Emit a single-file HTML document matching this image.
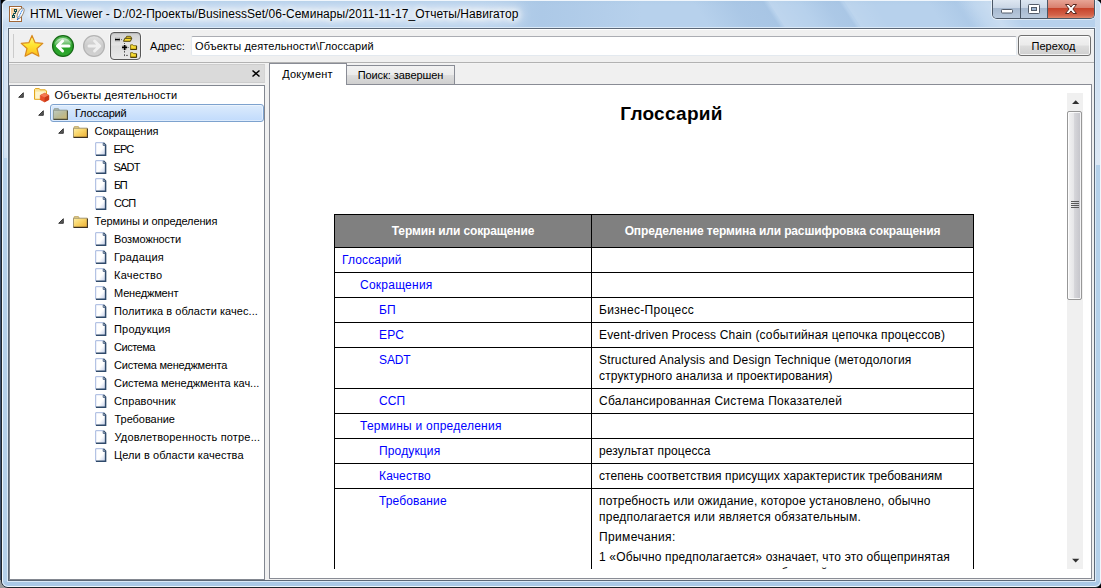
<!DOCTYPE html>
<html lang="ru">
<head>
<meta charset="utf-8">
<title>HTML Viewer</title>
<style>
*{box-sizing:border-box;margin:0;padding:0}
html,body{width:1101px;height:588px;overflow:hidden}
body{position:relative;background:#000;font-family:"Liberation Sans",sans-serif;font-size:11px;color:#000}
.abs{position:absolute}
/* ---------- window frame ---------- */
#bgl{left:0;top:0;width:1px;height:588px;background:#3b4f6e}
#frame{left:1px;top:-1px;width:1101px;height:589px;border:1px solid #1f242b;border-radius:7px 7px 7px 7px;background:#b4d0ea;overflow:hidden}
#frame .hl{left:0;top:0;right:0;bottom:0;border:1px solid #f0f6fc;border-radius:6px}
#titlebg{left:0;top:0;width:1099px;height:28px;background:linear-gradient(to right,rgba(120,160,205,0) 480px,rgba(120,160,205,.16) 540px,rgba(120,160,205,.12) 570px,rgba(120,160,205,0) 640px),linear-gradient(to bottom,#f3f7fb 0,#f3f7fb 1px,#b4cfea 1px,#b7d1ec 6px,#b7d1ec 100%)}
#glow{left:-10px;top:7px;width:530px;height:15px;background:rgba(255,255,255,.54);filter:blur(6px);border-radius:8px}
.streak{top:1px;height:27px;transform:skewX(33deg);transform-origin:0 0}
#title{left:30px;top:7px;font-size:12px;line-height:15px;white-space:nowrap;letter-spacing:.04px;text-shadow:0 0 6px #fff,0 0 6px #fff,0 0 9px #fff}
#clientborder{left:8px;top:28px;width:1087px;height:553px;border:1px solid #5c6877;box-shadow:0 0 0 1px #dceaf8;background:#f0f0f0}
/* caption buttons */
#caps{left:992px;top:-1px;width:103px;height:20px;border:1px solid #4b5766;border-top:none;border-radius:0 0 5px 5px;overflow:hidden;box-shadow:0 0 0 1px rgba(255,255,255,.55)}
#caps div{position:absolute;top:0;height:19px}
#bmin{left:0;width:28px;background:linear-gradient(to bottom,#e0e9f3 0,#cbd7e6 45%,#a7b9cf 50%,#b9c9dc 100%);border-right:1px solid #4b5766}
#bmax{left:28px;width:27px;background:linear-gradient(to bottom,#e0e9f3 0,#cbd7e6 45%,#a7b9cf 50%,#b9c9dc 100%);border-right:1px solid #4b5766}
#bclose{left:55px;width:46px;background:linear-gradient(to bottom,#e9a99b 0,#d9806f 45%,#c7432b 50%,#d4634a 85%,#e08a6e 100%)}
/* ---------- toolbar ---------- */
#toolbar{left:9px;top:29px;width:1085px;height:33px;background:#f0f0f0;border-top:1px solid #fff}
#tbline{left:9px;top:62px;width:1085px;height:1px;background:#b2b2b2}
#tbline2{left:9px;top:63px;width:1085px;height:1px;background:#f3f3f3}
#sep{left:13px;top:34px;width:1px;height:24px;background:#cbcbcb}
#treebtn{left:110px;top:32px;width:31px;height:28px;border:1px solid #585858;border-radius:4px;background:linear-gradient(to bottom,#cfcfcf 0,#e5e5e5 46%,#dedede 50%,#e9e9e9 100%);box-shadow:inset 0 1px 1px rgba(0,0,0,.1),0 0 0 1px rgba(255,255,255,.5)}
#addrlab{left:150px;top:39px;line-height:14px;white-space:nowrap;letter-spacing:.05px}
#addr{left:191px;top:36px;width:826px;height:20px;background:#fff;border:1px solid #e3e9ef;border-top-color:#abadb3;border-radius:2px}
#addrtxt{left:195px;top:39px;line-height:14px;white-space:nowrap;letter-spacing:.12px}
#gobtn{left:1018px;top:35px;width:73px;height:21px;border:1px solid #707070;border-radius:3px;background:linear-gradient(to bottom,#f2f2f2 0,#ebebeb 48%,#dddddd 52%,#cfcfcf 100%);box-shadow:inset 0 0 0 1px rgba(255,255,255,.75);text-align:center;line-height:19px;padding-top:1px;letter-spacing:.05px;padding-right:2px}
/* ---------- left panel ---------- */
#lhead{left:9px;top:64px;width:256px;height:19px;background:#dadada;border:1px solid #cdcdcd;border-left-color:#d4d4d4;border-right-color:#d4d4d4}
#tree{left:9px;top:85px;width:256px;height:495px;background:#fff;border:1px solid #828790}
.row{position:absolute;left:0;height:18px;line-height:18px;white-space:nowrap;letter-spacing:.12px}
.sel{position:absolute;left:40px;top:18px;width:214px;height:18px;border:1px solid #7da2ce;border-radius:3px;background:linear-gradient(to bottom,#dcebfc,#c1dbfc);box-shadow:inset 0 0 0 1px rgba(255,255,255,.45)}
.exp{position:absolute;width:0;height:0;border-style:solid;border-width:0 0 6px 6px;border-color:transparent transparent #404040 transparent}
/* ---------- right panel ---------- */
#tabpage{left:269px;top:84px;width:823px;height:495px;background:#fff;border:1px solid #898c95}
#tab1{left:269px;top:63px;width:78px;height:22px;background:#fff;border:1px solid #898c95;border-bottom:none;text-align:center;line-height:20px;letter-spacing:.23px;padding-right:1px}
#tab2{left:346px;top:65px;width:109px;height:19px;border:1px solid #898c95;border-bottom:none;background:linear-gradient(to bottom,#f2f2f2 0,#ebebeb 50%,#dddddd 52%,#cfcfcf 100%);text-align:center;line-height:18px;letter-spacing:-.07px}
/* scrollbar */
#sb{left:1067px;top:93px;width:16px;height:476px;background:#f0f0f0}
#thumb{left:1067px;top:111px;width:15px;height:189px;border:1px solid #979797;border-radius:2px;background:linear-gradient(to right,#f3f3f3 0,#e6e6e8 46%,#d6d6da 50%,#c3c3c9 100%);box-shadow:inset 0 0 0 1px rgba(255,255,255,.8)}
/* document */
#doc{left:270px;top:85px;width:797px;height:484px;overflow:hidden;background:#fff}
#h1{left:0;top:17px;width:803px;text-align:center;font-size:19px;font-weight:bold;line-height:24px;letter-spacing:.28px}
table{position:absolute;left:64px;top:129px;border-collapse:collapse;font-size:12px;table-layout:fixed;width:639px}
td,th{white-space:nowrap;border:1px solid #000;vertical-align:top;padding:4px 7px 4px 7px;line-height:16px;text-align:left;font-weight:normal;letter-spacing:.14px}
th{background:#808080;color:#fff;font-weight:bold;text-align:center;padding:8px 4px 8px 4px;letter-spacing:-.13px}
td a{color:#0000ff;text-decoration:none}
.i1{padding-left:25px}.i2{padding-left:44px}
td p{margin:0 0 4px 0}
</style>
</head>
<body>

<svg width="0" height="0" style="position:absolute">
 <defs>
  <linearGradient id="fg" x1="0" y1="0" x2="1" y2="1"><stop offset="0" stop-color="#fff0a6"/><stop offset=".5" stop-color="#f8d162"/><stop offset="1" stop-color="#ecae34"/></linearGradient>
  <linearGradient id="fgs" x1="0" y1="0" x2="1" y2="1"><stop offset="0" stop-color="#c0ccc2"/><stop offset=".5" stop-color="#b9ba96"/><stop offset="1" stop-color="#ccb66c"/></linearGradient>
  <linearGradient id="dgr" x1="0" y1="0" x2="1" y2="1"><stop offset="0" stop-color="#ffffff"/><stop offset=".55" stop-color="#ffffff"/><stop offset="1" stop-color="#b9c6e4"/></linearGradient>
  <linearGradient id="eg" x1="0" y1="0" x2="1" y2="1"><stop offset="0" stop-color="#222"/><stop offset="1" stop-color="#555"/></linearGradient>
  <symbol id="folder" viewBox="0 0 15 12">
    <path d="M.8 2.300L1.400.500H5.400l.9 1.800z" fill="#f7e3a0" stroke="#b89c50" stroke-width=".7"/>
    <path d="M.5 2.200H14.400V11.400H.5z" fill="url(#fg)"/>
    <path d="M.5 11.400V2.200H14.300" fill="none" stroke="#9a8c68" stroke-width=".9"/>
    <path d="M14.400 2.500V11.400H.5" fill="none" stroke="#3c3020" stroke-width="1.100"/>
  </symbol>
  <symbol id="folders" viewBox="0 0 15 12">
    <path d="M.8 2.300L1.400.500H5.400l.9 1.800z" fill="#b8c4bc" stroke="#8c9890" stroke-width=".7"/>
    <path d="M.5 2.200H14.400V11.400H.5z" fill="url(#fgs)"/>
    <path d="M.5 11.400V2.200H14.300" fill="none" stroke="#8a9488" stroke-width=".9"/>
    <path d="M14.400 2.500V11.400H.5" fill="none" stroke="#4a4a38" stroke-width="1.100"/>
  </symbol>
  <symbol id="docu" viewBox="0 0 12 15">
    <path d="M.6.600H8.400L10.800 3V13.600H.6z" fill="url(#dgr)"/>
    <path d="M.7 13.400V.7H8.400" fill="none" stroke="#a3b5de" stroke-width="1"/>
    <path d="M8.400.8L10.600 3V13.300H1" fill="none" stroke="#2f4a6b" stroke-width="1.500"/>
    <path d="M8.200 1.200V3.400H10.400" fill="#eef2fa" stroke="#3c5678" stroke-width=".9"/>
  </symbol>
  <symbol id="expd" viewBox="0 0 7 7"><path d="M6.200.8V6.200H.8z" fill="#595959" stroke="#262626" stroke-width="1" stroke-linejoin="round"/></symbol>
 </defs>
</svg>
<div id="bgl" class="abs"></div>
<div class="abs" style="left:0;top:580px;width:8px;height:8px;background:#9a9a9a"></div>
<div id="frame" class="abs">
  <div id="titlebg" class="abs"></div>
  <div id="glow" class="abs"></div>
  <div class="streak abs" style="left:690px;width:75px;background:linear-gradient(to right,rgba(120,160,205,0) 0,rgba(120,160,205,.2) 55%,rgba(120,160,205,.24) 94%,rgba(120,160,205,0) 100%)"></div>
  <div class="streak abs" style="left:766px;width:30px;background:linear-gradient(to right,rgba(255,255,255,.1),rgba(255,255,255,0))"></div>
  <div class="streak abs" style="left:796px;width:44px;background:linear-gradient(to right,rgba(120,160,205,0) 0,rgba(120,160,205,.18) 60%,rgba(120,160,205,.21) 92%,rgba(120,160,205,0) 100%)"></div>
  <div class="streak abs" style="left:842px;width:30px;background:linear-gradient(to right,rgba(255,255,255,.09),rgba(255,255,255,0))"></div>
  <div class="streak abs" style="left:925px;width:45px;background:linear-gradient(to right,rgba(120,160,205,0) 0,rgba(120,160,205,.14) 60%,rgba(120,160,205,0) 100%)"></div>
  <div class="streak abs" style="left:955px;width:50px;background:linear-gradient(to right,rgba(255,255,255,0),rgba(255,255,255,.25) 60%,rgba(255,255,255,0))"></div>
  <div class="abs" style="left:2px;top:20px;width:5px;height:138px;background:linear-gradient(to bottom,rgba(213,227,243,0),#d5e3f3 12px,#d3e2f2 130px,#cfdff1 100%)"></div>
  <div class="abs" style="left:1093px;top:2px;width:6px;height:163px;background:linear-gradient(to bottom,#c9dcf0 0,#cfe0f2 40%,#dde8f5 100%)"></div>
  <div class="abs" style="left:0;top:581px;width:1099px;height:5px;background:#abc9e7"></div>
  <div class="hl abs"></div>
</div>
<div id="title" class="abs">HTML Viewer - D:/02-Проекты/BusinessSet/06-Семинары/2011-11-17_Отчеты/Навигатор</div>
<div id="caps" class="abs"><div id="bmin"></div><div id="bmax"></div><div id="bclose"></div></div>
<div id="clientborder" class="abs"></div>

<div id="toolbar" class="abs"></div>
<div id="tbline" class="abs"></div>
<div id="tbline2" class="abs"></div>
<div id="sep" class="abs"></div>
<div id="treebtn" class="abs"></div>
<div id="addrlab" class="abs">Адрес:</div>
<div id="addr" class="abs"></div>
<div id="addrtxt" class="abs">Объекты деятельности\Глоссарий</div>
<div id="gobtn" class="abs">Переход</div>

<div id="lhead" class="abs"></div>
<div id="tree" class="abs">
  <div class="sel"></div>
  <svg class="abs" style="left:8px;top:6px" width="6" height="6"><use href="#expd"/></svg>
  <svg class="abs" style="left:28px;top:24px" width="6" height="6"><use href="#expd"/></svg>
  <svg class="abs" style="left:48px;top:42px" width="6" height="6"><use href="#expd"/></svg>
  <svg class="abs" style="left:48px;top:132px" width="6" height="6"><use href="#expd"/></svg>
  <svg class="abs" style="left:23px;top:1px" width="18" height="16" viewBox="0 0 18 16">
<path d="M1.500 12.300V2.500L2.300 1.600h4l.8 1.200h5.200l1.200 1.300v8.200z" fill="#fbe59a" stroke="#e3a51a" stroke-width="1" stroke-linejoin="round"/>
<path d="M2.500 11.500V4.600h9.700v6.900z" fill="#fdf4cc"/>
<path d="M7.300 8.300l4.300-2.100 4.300 2.100v4.400l-4.300 2.300-4.300-2.300z" fill="#e8502a" stroke="#d8431f" stroke-width=".6" stroke-linejoin="round"/>
<path d="M7.300 8.300l4.300 2.100 4.300-2.100-4.300-2.100z" fill="#f47a52"/>
<path d="M11.600 10.400v4.600l4.300-2.300V8.300z" fill="#c93a18"/>
</svg>
  <svg class="abs" style="left:43px;top:22px" width="15" height="12"><use href="#folders"/></svg>
  <svg class="abs" style="left:63px;top:40px" width="15" height="12"><use href="#folder"/></svg>
  <svg class="abs" style="left:63px;top:130px" width="15" height="12"><use href="#folder"/></svg>
  <svg class="abs" style="left:85px;top:56px" width="12" height="15"><use href="#docu"/></svg>
  <svg class="abs" style="left:85px;top:74px" width="12" height="15"><use href="#docu"/></svg>
  <svg class="abs" style="left:85px;top:92px" width="12" height="15"><use href="#docu"/></svg>
  <svg class="abs" style="left:85px;top:110px" width="12" height="15"><use href="#docu"/></svg>
  <svg class="abs" style="left:85px;top:146px" width="12" height="15"><use href="#docu"/></svg>
  <svg class="abs" style="left:85px;top:164px" width="12" height="15"><use href="#docu"/></svg>
  <svg class="abs" style="left:85px;top:182px" width="12" height="15"><use href="#docu"/></svg>
  <svg class="abs" style="left:85px;top:200px" width="12" height="15"><use href="#docu"/></svg>
  <svg class="abs" style="left:85px;top:218px" width="12" height="15"><use href="#docu"/></svg>
  <svg class="abs" style="left:85px;top:236px" width="12" height="15"><use href="#docu"/></svg>
  <svg class="abs" style="left:85px;top:254px" width="12" height="15"><use href="#docu"/></svg>
  <svg class="abs" style="left:85px;top:272px" width="12" height="15"><use href="#docu"/></svg>
  <svg class="abs" style="left:85px;top:290px" width="12" height="15"><use href="#docu"/></svg>
  <svg class="abs" style="left:85px;top:308px" width="12" height="15"><use href="#docu"/></svg>
  <svg class="abs" style="left:85px;top:326px" width="12" height="15"><use href="#docu"/></svg>
  <svg class="abs" style="left:85px;top:344px" width="12" height="15"><use href="#docu"/></svg>
  <svg class="abs" style="left:85px;top:362px" width="12" height="15"><use href="#docu"/></svg>
  <div class="row" style="top:0px;left:44.5px;letter-spacing:0.21px">Объекты деятельности</div>
  <div class="row" style="top:18px;left:65.0px;letter-spacing:-0.23px">Глоссарий</div>
  <div class="row" style="top:36px;left:84.5px;letter-spacing:-0.04px">Сокращения</div>
  <div class="row" style="top:54px;left:103.6px;letter-spacing:-0.99px">EPC</div>
  <div class="row" style="top:72px;left:103.6px;letter-spacing:-0.84px">SADT</div>
  <div class="row" style="top:90px;left:104.0px;letter-spacing:-1.44px">БП</div>
  <div class="row" style="top:108px;left:104.0px;letter-spacing:-0.81px">ССП</div>
  <div class="row" style="top:126px;left:84.5px;letter-spacing:-0.12px">Термины и определения</div>
  <div class="row" style="top:144px;left:104.0px;letter-spacing:-0.11px">Возможности</div>
  <div class="row" style="top:162px;left:104.1px;letter-spacing:0.15px">Градация</div>
  <div class="row" style="top:180px;left:104.0px;letter-spacing:0.23px">Качество</div>
  <div class="row" style="top:198px;left:104.0px;letter-spacing:-0.16px">Менеджмент</div>
  <div class="row" style="top:216px;left:104.0px;letter-spacing:0.06px">Политика в области качес...</div>
  <div class="row" style="top:234px;left:104.0px;letter-spacing:0.18px">Продукция</div>
  <div class="row" style="top:252px;left:104.0px;letter-spacing:-0.48px">Система</div>
  <div class="row" style="top:270px;left:104.0px;letter-spacing:-0.23px">Система менеджмента</div>
  <div class="row" style="top:288px;left:104.0px;letter-spacing:-0.05px">Система менеджмента кач...</div>
  <div class="row" style="top:306px;left:104.0px;letter-spacing:0.12px">Справочник</div>
  <div class="row" style="top:324px;left:104.5px;letter-spacing:-0.04px">Требование</div>
  <div class="row" style="top:342px;left:104.5px;letter-spacing:0.17px">Удовлетворенность потре...</div>
  <div class="row" style="top:360px;left:104.0px;letter-spacing:0.08px">Цели в области качества</div>
</div>

<div id="tabpage" class="abs"></div>
<div id="tab2" class="abs">Поиск: завершен</div>
<div id="tab1" class="abs">Документ</div>
<div id="doc" class="abs">
  <div id="h1" class="abs">Глоссарий</div>
  <table>
    <colgroup><col style="width:257px"><col style="width:382px"></colgroup>
    <tr><th>Термин или сокращение</th><th>Определение термина или расшифровка сокращения</th></tr>
    <tr><td><a>Глоссарий</a></td><td></td></tr>
    <tr><td class="i1"><a style="letter-spacing:.24px">Сокращения</a></td><td></td></tr>
    <tr><td class="i2"><a>БП</a></td><td><span style="letter-spacing:0.31px">Бизнес-Процесс</span></td></tr>
    <tr><td class="i2"><a>EPC</a></td><td><span style="letter-spacing:0.16px">Event-driven Process Chain (событийная цепочка процессов)</span></td></tr>
    <tr><td class="i2"><a style="letter-spacing:-.1px">SADT</a></td><td><span style="letter-spacing:0.18px">Structured Analysis and Design Technique (методология</span><br>структурного анализа и проектирования)</td></tr>
    <tr><td class="i2"><a>ССП</a></td><td><span style="letter-spacing:0.26px">Сбалансированная Система Показателей</span></td></tr>
    <tr><td class="i1"><a style="letter-spacing:.24px">Термины и определения</a></td><td></td></tr>
    <tr><td class="i2"><a>Продукция</a></td><td>результат процесса</td></tr>
    <tr><td class="i2"><a>Качество</a></td><td><span style="letter-spacing:0.08px">степень соответствия присущих характеристик требованиям</span></td></tr>
    <tr><td class="i2"><a>Требование</a></td><td><p>потребность или ожидание, которое установлено, обычно<br><span style="letter-spacing:0.24px">предполагается или является обязательным.</span></p><p><span style="letter-spacing:0.37px">Примечания:</span></p><p><span style="letter-spacing:0.16px">1 «Обычно предполагается» означает, что это общепринятая</span><br>практика организации, ее потребителей и других<br>заинтересованных сторон, когда предполагаются<br>рассматриваемые потребности или ожидания.</p></td></tr>
  </table>
</div>
<div id="sb" class="abs"></div>
<div id="thumb" class="abs"></div>

<!-- app icon -->
<svg class="abs" style="left:8px;top:5px" width="18" height="18" viewBox="0 0 18 18">
  <defs><linearGradient id="ai" x1="0" y1="0" x2="1" y2="1"><stop offset="0" stop-color="#f3bf80"/><stop offset=".55" stop-color="#fbe6cc"/><stop offset="1" stop-color="#ffffff"/></linearGradient></defs>
  <rect x="1.5" y="1.5" width="12" height="15" fill="#fff" stroke="#a0673a" stroke-width="1"/>
  <rect x="3" y="3" width="9" height="12" fill="url(#ai)"/>
  <g fill="none" stroke="#0a4a50" stroke-width="1"><rect x="6.5" y="4.5" width="2" height="2"/><rect x="4.5" y="10.5" width="2" height="2"/><path d="M7.5 7v1.5h-2v2"/></g>
  <ellipse cx="12.600" cy="8.200" rx="2.500" ry="5.600" transform="rotate(27 12.600 8.200)" fill="#fff" stroke="#93826f" stroke-width=".9"/>
  <path d="M14.500 4.600L9.400 14.700" stroke="#3a8ae8" stroke-width="1.100" fill="none" stroke-dasharray="1.300 .5"/>
  <path d="M10.300 13.200L9.300 15" stroke="#2a6ad0" stroke-width="1.200" fill="none"/>
</svg>
<!-- caption glyphs -->
<svg class="abs" style="left:1000px;top:8px" width="14" height="7" viewBox="0 0 14 7"><rect x="1.500" y="1.500" width="11" height="3.500" rx=".8" fill="#fff" stroke="#535c6a" stroke-width="1"/></svg>
<svg class="abs" style="left:1027px;top:3px" width="14" height="12" viewBox="0 0 14 12"><rect x="1.500" y="1.500" width="11" height="9" rx=".8" fill="#fff" stroke="#535c6a" stroke-width="1"/><rect x="4.500" y="4.500" width="5" height="3" fill="#9db4cf" stroke="#535c6a" stroke-width="1"/></svg>
<svg class="abs" style="left:1064px;top:3px" width="14" height="12" viewBox="0 0 14 12"><path d="M1.500 1.500h3.500L7 4.100l2-2.600h3.500L8.900 6l3.600 4.500H9L7 7.900 5 10.500H1.500L5.100 6z" fill="#fff" stroke="#5a2a22" stroke-width="1" stroke-linejoin="round"/></svg>
<!-- toolbar: star -->
<svg class="abs" style="left:20px;top:34px" width="24" height="24" viewBox="0 0 24 24">
  <defs><linearGradient id="sg" x1="0" y1="0" x2="0" y2="1"><stop offset="0" stop-color="#fff88c"/><stop offset=".45" stop-color="#ffe632"/><stop offset="1" stop-color="#fdbb1e"/></linearGradient></defs>
  <path d="M12 1.400l3.100 7.300 7.700.7-5.800 5.100 1.900 7.700L12 18.600l-6.900 3.600 1.900-7.700-5.800-5.100 7.700-.7z" fill="url(#sg)" stroke="#d98a1e" stroke-width="1.200" stroke-linejoin="round"/>
</svg>
<!-- back -->
<svg class="abs" style="left:51px;top:34px" width="24" height="24" viewBox="0 0 24 24">
  <defs><linearGradient id="gg" x1="0" y1="0" x2="0" y2="1"><stop offset="0" stop-color="#5fbf5f"/><stop offset=".5" stop-color="#27a127"/><stop offset="1" stop-color="#2fa82f"/></linearGradient>
  <linearGradient id="gh" x1="0" y1="0" x2="0" y2="1"><stop offset="0" stop-color="#fff" stop-opacity=".75"/><stop offset="1" stop-color="#fff" stop-opacity=".1"/></linearGradient></defs>
  <circle cx="12" cy="12" r="10.400" fill="url(#gg)" stroke="#176a17" stroke-width="1.300"/>
  <path d="M3.500 10.500A8.800 8.800 0 0 1 20.500 10.500C16 12.500 8 12.500 3.500 10.500z" fill="url(#gh)"/>
  <path d="M18 12H7.500M11.600 7L6.400 12l5.200 5" fill="none" stroke="#fff" stroke-width="3" stroke-linecap="round" stroke-linejoin="round"/>
</svg>
<!-- forward (disabled) -->
<svg class="abs" style="left:82px;top:34px" width="24" height="24" viewBox="0 0 24 24">
  <defs><linearGradient id="dg" x1="0" y1="0" x2="0" y2="1"><stop offset="0" stop-color="#e2e2e2"/><stop offset=".5" stop-color="#cbcbcb"/><stop offset="1" stop-color="#d2d2d2"/></linearGradient></defs>
  <circle cx="12" cy="12" r="10.400" fill="url(#dg)" stroke="#b4b4b4" stroke-width="1.300"/>
  <path d="M7 12H17M12.600 7L17.800 12l-5.200 5" fill="none" stroke="#efefef" stroke-width="3" stroke-linecap="round" stroke-linejoin="round"/>
</svg>
<!-- tree glyph inside toggle button -->
<svg class="abs" style="left:110px;top:32px" width="31" height="28" viewBox="0 0 31 28">
  <defs><linearGradient id="tf" x1="0" y1="0" x2="0" y2="1"><stop offset="0" stop-color="#fbe64a"/><stop offset="1" stop-color="#f2cf1c"/></linearGradient></defs>
  <rect x="5.300" y="5.500" width="4.400" height="4" fill="#f4f4f4" stroke="#bdbdbd" stroke-width=".7"/>
  <rect x="5" y="6.700" width="4.900" height="1.700" fill="#000"/>
  <rect x="11" y="7.100" width="1" height="1" fill="#666"/>
  <path d="M16 6.300V5l.8-.7h3.700l.7.700v1.300" fill="#f0cf30" stroke="#4a3c00" stroke-width=".8" stroke-linejoin="round"/>
  <path d="M13.500 9.300l1.300-3h7l-1.400 3z" fill="url(#tf)" stroke="#3c3000" stroke-width=".9" stroke-linejoin="round"/>
  <path d="M14.500 11v1M14.500 18.800v1.800M14.500 22.300v1.800" stroke="#555" stroke-width="1"/>
  <rect x="12.200" y="13.300" width="4.600" height="4.400" fill="#f4f4f4" stroke="#bdbdbd" stroke-width=".6"/>
  <path d="M12 15.450h5.100M14.650 13v5" stroke="#000" stroke-width="1.700"/>
  <rect x="17.600" y="15" width="1.200" height=".9" fill="#666"/>
  <path d="M20.600 17.300v-4.500h2.300l.6.900h2.900v3.600z" fill="url(#tf)" stroke="#6a5600" stroke-width=".8" stroke-linejoin="round"/>
  <path d="M20.400 17.500h6.200v-3.600" fill="none" stroke="#3c3000" stroke-width=".9"/>
  <rect x="16" y="22.900" width="1.900" height=".9" fill="#555"/>
  <path d="M20.600 25.200v-4.500h2.300l.6.900h2.900v3.600z" fill="url(#tf)" stroke="#6a5600" stroke-width=".8" stroke-linejoin="round"/>
  <path d="M20.400 25.400h6.200v-3.600" fill="none" stroke="#3c3000" stroke-width=".9"/>
</svg>
<!-- left header close x -->
<svg class="abs" style="left:251px;top:69px" width="10" height="9" viewBox="0 0 10 9"><path d="M1.500 1.500l7 6M8.500 1.500l-7 6" stroke="#000" stroke-width="1.500" fill="none"/></svg>
<!-- scrollbar arrows + grip -->
<svg class="abs" style="left:1071px;top:99px" width="10" height="6" viewBox="0 0 10 6"><path d="M1.100 5.100h7.200L4.700 1.200z" fill="#303030"/></svg>
<svg class="abs" style="left:1071px;top:558px" width="10" height="6" viewBox="0 0 10 6"><path d="M1.100 .700h7.200L4.700 4.600z" fill="#303030"/></svg>
<svg class="abs" style="left:1071px;top:201px" width="8" height="8" viewBox="0 0 8 8"><path d="M0 .5h8M0 2.500h8M0 4.500h8M0 6.500h8" stroke="#5a5a5a" stroke-width="1"/></svg>
</body>
</html>
